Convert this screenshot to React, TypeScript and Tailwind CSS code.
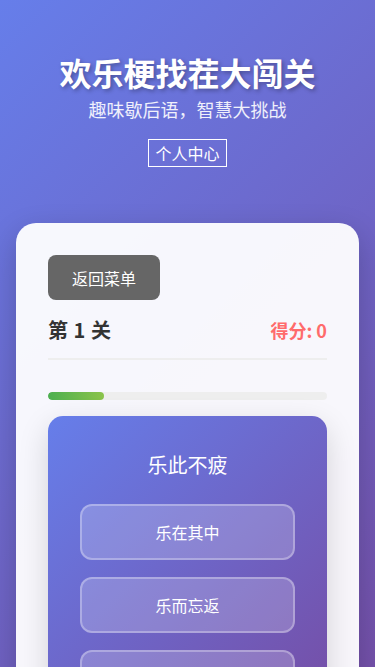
const font = '"Noto Sans CJK SC", "Noto Sans", sans-serif';

const options = ["乐在其中", "乐而忘返", "乐不思蜀"];

export default function App() {
  return (
    <div
      className="min-h-screen bg-[linear-gradient(135deg,#667eea_0%,#764ba2_100%)] px-4 pb-8 text-white"
      style={{ fontFamily: font }}
    >
      {/* header */}
      <header className="flex flex-col items-center pt-12">
        <h1 className="text-[32px] font-bold leading-[48px] [text-shadow:2px_2px_4px_rgba(0,0,0,0.3)]">
          欢乐梗找茬大闯关
        </h1>
        <p className="text-lg leading-[27px] text-white/90">趣味歇后语，智慧大挑战</p>
        <button className="mt-4 border border-white px-1.5 py-px text-base leading-6">个人中心</button>
      </header>

      {/* game card */}
      <main className="mt-14 rounded-[20px] bg-white/95 px-8 pt-8 pb-8 shadow-[0_10px_30px_rgba(0,0,0,0.2)]">
        <button className="h-[45px] w-[112px] rounded-lg bg-[#666666] text-base text-white">返回菜单</button>

        <div className="mt-4 flex items-center justify-between border-b-2 border-[#eeeeee] pb-[14px]">
          <span className="text-xl font-bold leading-7 tracking-[0.5px] text-[#333333]">第 1 关</span>
          <span className="text-lg font-bold leading-7 text-[#ff6b6b]">得分: 0</span>
        </div>

        <div className="mt-8 h-2 overflow-hidden rounded-full bg-[#eeeeee]">
          <div
            className="h-full rounded-full bg-[linear-gradient(90deg,#4caf50,#8bc34a)]"
            style={{ width: "20%" }}
          />
        </div>

        <div className="mt-4 rounded-[15px] bg-[linear-gradient(135deg,#667eea_0%,#764ba2_100%)] px-8 pt-[35px] pb-8 shadow-[0_10px_30px_rgba(0,0,0,0.15)]">
          <p className="text-center text-xl leading-7">乐此不疲</p>
          <div className="mt-[25px] flex flex-col gap-[17px]">
            {options.map((o) => (
              <button
                key={o}
                className="h-14 rounded-xl border-2 border-white/30 bg-white/20 text-base text-white"
              >
                {o}
              </button>
            ))}
          </div>
        </div>
      </main>
    </div>
  );
}
